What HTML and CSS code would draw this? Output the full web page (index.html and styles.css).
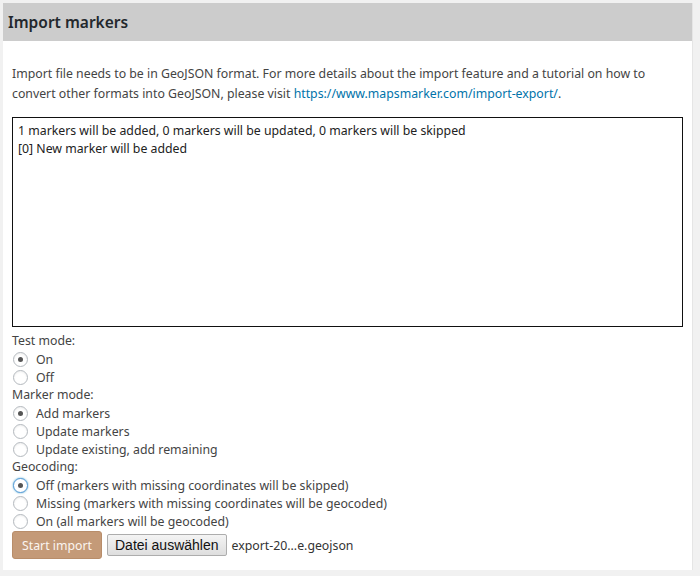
FILE: index.html
```html
<!DOCTYPE html>
<html lang="en">
<head>
  <meta charset="UTF-8" />
  <title>Import markers</title>
  <link rel="stylesheet" href="styles.css">
</head>
<body>

  <div class="panel">
    <div class="panel-header">
      <h2>Import markers</h2>
    </div>

    <div class="panel-body">
      <p class="intro">
        Import file needs to be in GeoJSON format. For more details about the import feature and a tutorial on how to<br>
        convert other formats into GeoJSON, please visit <a href="#">https://www.mapsmarker.com/import-export/</a>.
      </p>

      <div class="log">
        <div>1 markers will be added, 0 markers will be updated, 0 markers will be skipped</div>
        <div>[0] New marker will be added</div>
      </div>

      <!-- Test mode -->
      <div class="group-label">Test mode:</div>
      <label class="radio"><input type="radio" name="test" checked> On</label>
      <label class="radio"><input type="radio" name="test"> Off</label>

      <!-- Marker mode -->
      <div class="group-label">Marker mode:</div>
      <label class="radio"><input type="radio" name="mode" checked> Add markers</label>
      <label class="radio"><input type="radio" name="mode"> Update markers</label>
      <label class="radio"><input type="radio" name="mode"> Update existing, add remaining</label>

      <!-- Geocoding -->
      <div class="group-label">Geocoding:</div>
      <label class="radio"><input type="radio" name="geo" class="focus" checked> Off (markers with missing coordinates will be skipped)</label>
      <label class="radio"><input type="radio" name="geo"> Missing (markers with missing coordinates will be geocoded)</label>
      <label class="radio"><input type="radio" name="geo"> On (all markers will be geocoded)</label>

      <div class="actions">
        <button class="btn-import">Start import</button>
        <span class="file-btn">Datei auswählen</span>
        <span class="file-name">export-20...e.geojson</span>
      </div>
    </div>
  </div>

</body>
</html>
```

FILE: styles.css
```css
body {
  margin: 0;
  padding: 3px 0 0 3px;
  background: #f1f1f1;
  font-family: "Noto Sans", "Open Sans", sans-serif;
  font-size: 12.3px;
  color: #444;
}
.panel {
  width: 690px;
  height: 567px;
  background: #fff;
  box-sizing: border-box;
  border-right: 1px solid #e5e5e5;
}
.panel-header {
  background: #ccc;
  height: 38px;
  padding: 0 5px;
}
.panel-header h2 {
  margin: 0;
  font-size: 15.5px;
  font-weight: 600;
  line-height: 38px;
  color: #23282d;
}
.panel-body {
  padding: 0 9px;
}
.intro {
  margin: 0;
  padding-top: 23px;
  line-height: 19.5px;
}
.intro a {
  color: #0073aa;
  text-decoration: none;
}
.log {
  margin-top: 14px;
  height: 200px;
  border: 1px solid #111;
  padding: 4px 5px;
  line-height: 18px;
  color: #222;
}
.group-label {
  line-height: 18px;
}
.log + .group-label {
  margin-top: 5px;
}
.radio {
  display: flex;
  align-items: center;
  height: 18px;
  gap: 8px;
}
.radio input {
  appearance: none;
  margin: 0 0 0 1px;
  width: 15px;
  height: 15px;
  border: 1px solid #b4b9be;
  border-radius: 50%;
  box-sizing: border-box;
  background: #fff;
  display: grid;
  place-items: center;
  box-shadow: inset 0 1px 2px rgba(0,0,0,0.07);
}
.radio input:checked::before {
  content: "";
  width: 5px;
  height: 5px;
  border-radius: 50%;
  background: #555;
}
.radio input.focus {
  border-color: #5b9dd9;
  box-shadow: 0 0 2px rgba(30,140,190,0.8);
}
.actions {
  display: flex;
  align-items: center;
  margin-top: 1px;
}
.btn-import {
  height: 28px;
  padding: 0 9px;
  background: #c49a78;
  border: 1px solid #b88d6a;
  border-radius: 3px;
  color: #fbf5f0;
  font-family: inherit;
  font-size: 12.3px;
}
.file-btn {
  margin-left: 5px;
  height: 22px;
  box-sizing: border-box;
  padding: 0 7px;
  border: 1px solid #adadad;
  border-radius: 2px;
  background: linear-gradient(#f4f4f4, #dedede);
  font-family: "Liberation Sans", Arial, sans-serif;
  font-size: 14px;
  line-height: 20px;
  color: #111;
}
.file-name {
  margin-left: 5px;
  color: #333;
}
```
